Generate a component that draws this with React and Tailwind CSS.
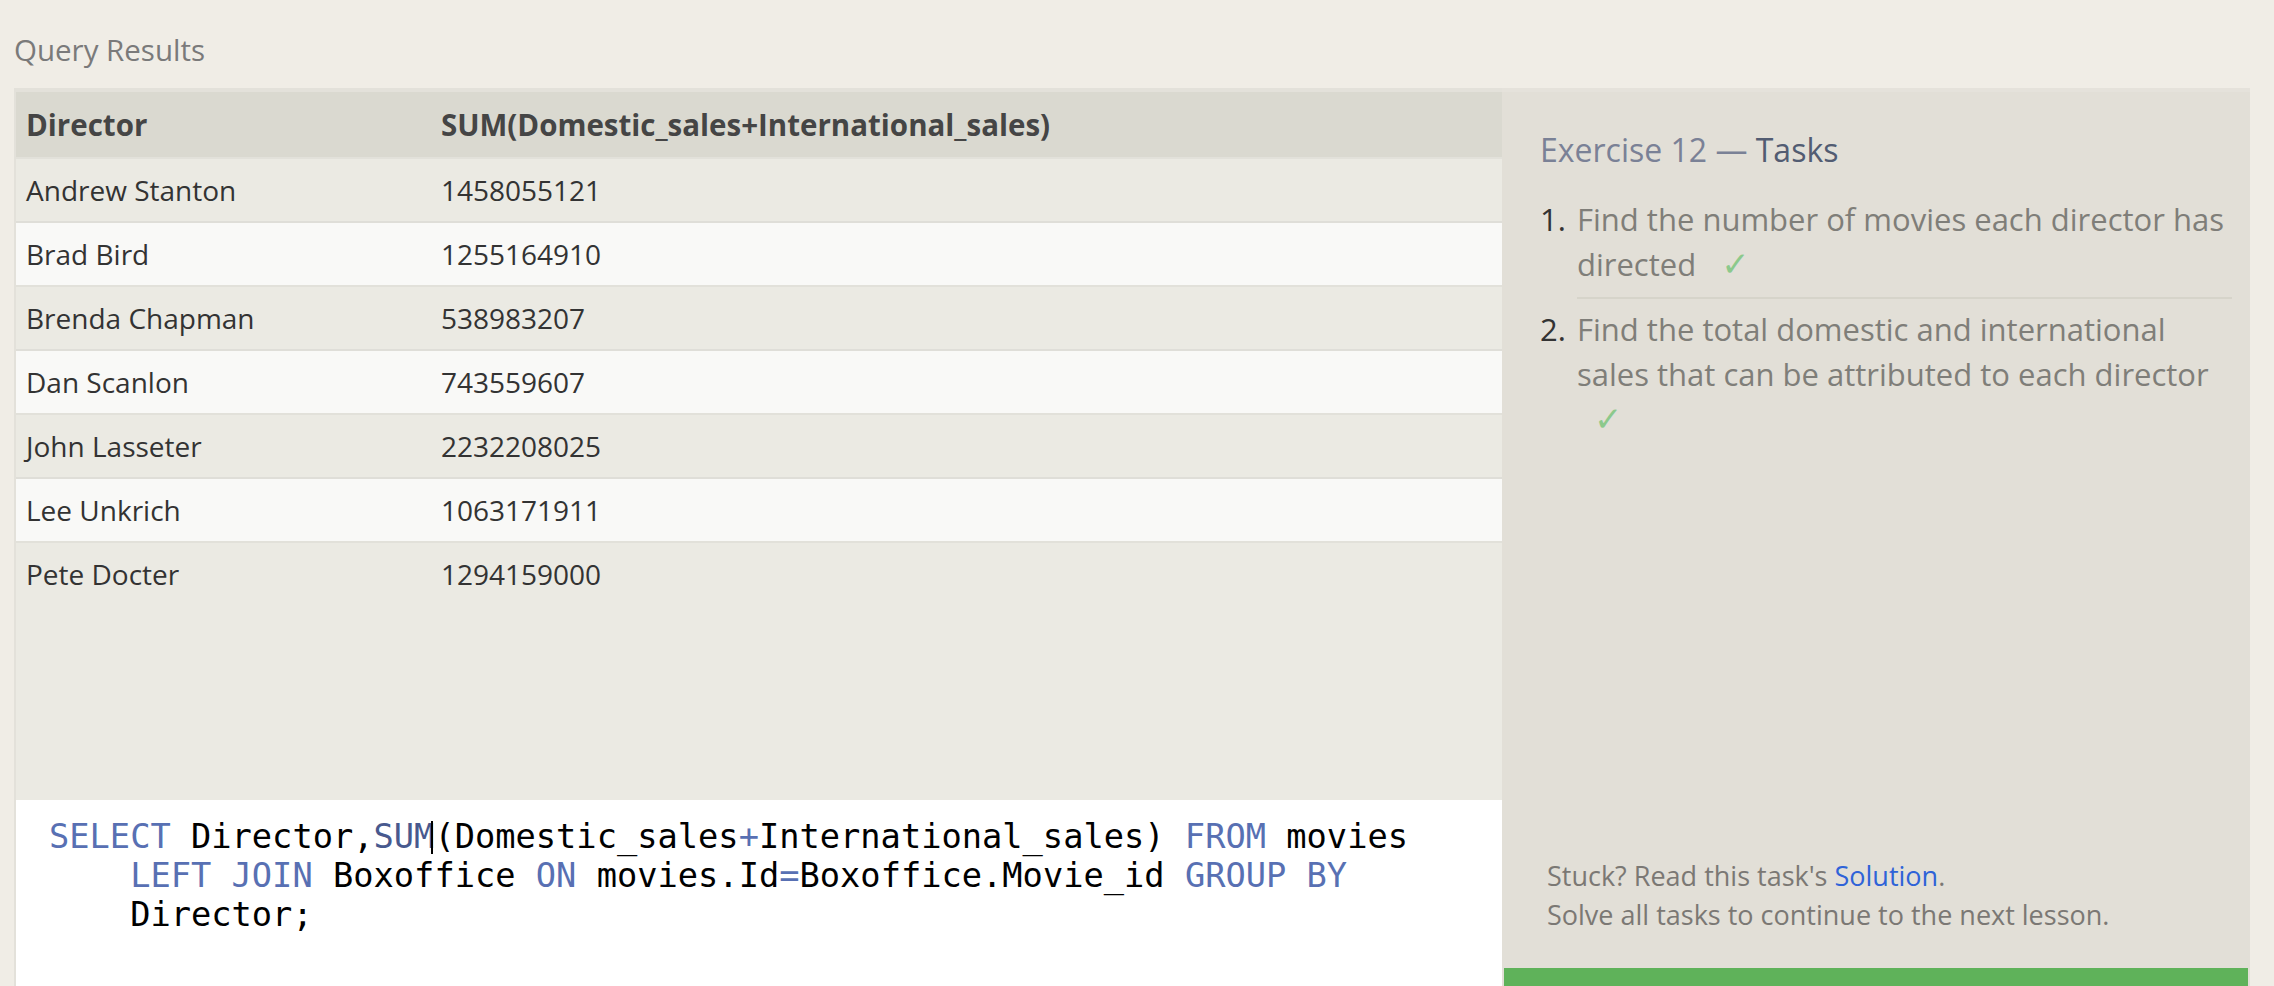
import React from "react";

const rows = [
  ["Andrew Stanton", "1458055121"],
  ["Brad Bird", "1255164910"],
  ["Brenda Chapman", "538983207"],
  ["Dan Scanlon", "743559607"],
  ["John Lasseter", "2232208025"],
  ["Lee Unkrich", "1063171911"],
  ["Pete Docter", "1294159000"],
];

const sans = { fontFamily: '"Open Sans", "Noto Sans", sans-serif' };

function Check({ className = "" }) {
  return (
    <span
      className={"inline-block text-[#8cc98c] text-[34px] leading-none " + className}
      style={{ fontFamily: '"DejaVu Sans", sans-serif' }}
    >
      ✓
    </span>
  );
}

export default function App() {
  return (
    <div
      className="h-[986px] w-[2274px] overflow-hidden bg-[#f0ede6] pl-[14px] flex flex-col"
      style={sans}
    >
      <div className="pt-[30px] text-[29.5px] leading-[40px] text-[#7a7a7a]">Query Results</div>
      <div className="mt-[18px] flex flex-1 min-h-0">
        {/* Left panel */}
        <div className="w-[1488px] flex flex-col border-t-4 border-l-2 border-[#e3e1da]">
          <div className="grid grid-cols-[415px_1fr] h-[65px] items-center bg-[#dad9d0] text-[29.5px] font-bold text-[#454545] leading-[38px]">
            <div className="pl-[10px]">Director</div>
            <div className="pl-[10px]">SUM(Domestic_sales+International_sales)</div>
          </div>
          {rows.map((r, i) => (
            <div
              key={r[0]}
              className={
                "grid grid-cols-[415px_1fr] h-[64px] items-center border-t-2 text-[28px] leading-[38px] text-[#333333] " +
                (i % 2 === 0 ? "bg-[#ebeae3] border-[#e2e1da]" : "bg-[#f9f9f7] border-[#dfded8]")
              }
            >
              <div className="pl-[10px]">{r[0]}</div>
              <div className="pl-[10px]">{r[1]}</div>
            </div>
          ))}
          <div className="flex-1 bg-[#ebeae3]" />
          <div
            className="h-[186px] bg-white pt-[17px] pl-[33px] text-[33.7px] leading-[39px] text-black whitespace-pre"
            style={{ fontFamily: '"DejaVu Sans Mono", monospace' }}
          >
            <div>
              <span className="text-[#5870b3]">SELECT</span> Director,
              <span className="text-[#48598e]">SUM</span>
              <span className="inline-block w-0 h-[33px] border-l-2 border-black align-[-6px] -ml-[3px] mr-[1px]" />
              (Domestic_sales<span className="text-[#5870b3]">+</span>International_sales){" "}
              <span className="text-[#5870b3]">FROM</span> movies
            </div>
            <div>
              {"    "}
              <span className="text-[#5870b3]">LEFT JOIN</span> Boxoffice{" "}
              <span className="text-[#5870b3]">ON</span> movies.Id
              <span className="text-[#5870b3]">=</span>Boxoffice.Movie_id{" "}
              <span className="text-[#5870b3]">GROUP BY</span>
            </div>
            <div>{"    "}Director;</div>
          </div>
        </div>

        {/* Right panel */}
        <div className="w-[748px] flex flex-col bg-[#e2dfd7] border-t-4 border-[#e5e2db]">
          <div className="pl-[38px] pr-[18px] pt-[38px]">
            <div className="text-[32px] leading-[40px] text-[#7a8196]">
              Exercise 12 — <span className="text-[#525c72]">Tasks</span>
            </div>
            <ol className="mt-[27px] text-[31px] leading-[45px]">
              <li className="flex">
                <span className="w-[37px] shrink-0 text-[#333333]">1.</span>
                <div className="flex-1 pb-[10px] border-b-2 border-[#d6d4ca] text-[#7f7e79] whitespace-nowrap">
                  Find the number of movies each director has
                  <br />
                  directed <Check className="ml-[17px]" />
                </div>
              </li>
              <li className="flex">
                <span className="w-[37px] shrink-0 text-[#333333] pt-[8px]">2.</span>
                <div className="flex-1 pt-[8px] text-[#7f7e79] whitespace-nowrap">
                  Find the total domestic and international
                  <br />
                  sales that can be attributed to each director
                  <br />
                  <Check className="ml-[17px]" />
                </div>
              </li>
            </ol>
          </div>
          <div className="flex-1" />
          <div className="pl-[45px] text-[27px] leading-[39px] text-[#7b7874]">
            <div>
              Stuck? Read this task's <span className="text-[#2f63d8]">Solution</span>.
            </div>
            <div>Solve all tasks to continue to the next lesson.</div>
          </div>
          <div className="mt-[34px] mx-[2px] h-[18px] bg-[#5fb25a]" />
        </div>
      </div>
    </div>
  );
}
